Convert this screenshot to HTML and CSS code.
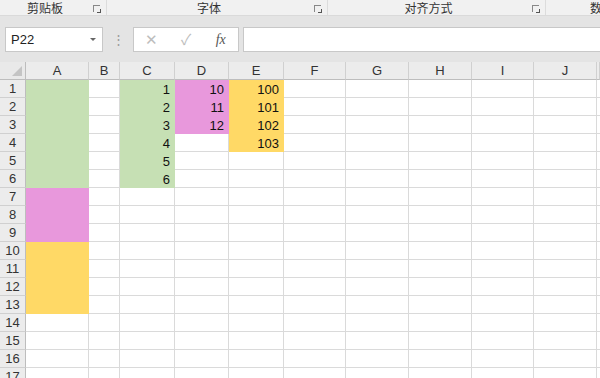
FILE: index.html
```html
<!DOCTYPE html>
<html lang="zh-CN">

<head>
    <meta charset="UTF-8">
    <title>工作表</title>
    <link rel="stylesheet" href="styles.css">
</head>

<body>
    <div class="ribbon">
        <div class="group g1"><span>剪贴板</span><i class="launcher"></i></div>
        <div class="group g2"><span>字体</span><i class="launcher"></i></div>
        <div class="group g3"><span>对齐方式</span><i class="launcher"></i></div>
        <div class="group g4"><span>数</span></div>
    </div>

    <div class="formula-bar">
        <div class="name-box">P22<span class="drop"></span></div>
        <div class="grip">⋮</div>
        <div class="fx-buttons">
            <span class="btn off">✕</span>
            <span class="btn off">✓</span>
            <span class="btn fx">fx</span>
        </div>
        <div class="formula-input"></div>
    </div>

    <div class="sheet" id="sheet"></div>

    <script>
        // columns and fills for the visible part of the sheet
        const cols = ["A", "B", "C", "D", "E", "F", "G", "H", "I", "J", ""];
        const fills = {
            A: { 1: "g", 2: "g", 3: "g", 4: "g", 5: "g", 6: "g", 7: "p", 8: "p", 9: "p", 10: "y", 11: "y", 12: "y", 13: "y" },
            C: { 1: "g", 2: "g", 3: "g", 4: "g", 5: "g", 6: "g" },
            D: { 1: "p", 2: "p", 3: "p" },
            E: { 1: "y", 2: "y", 3: "y", 4: "y" }
        };
        const values = {
            C: { 1: 1, 2: 2, 3: 3, 4: 4, 5: 5, 6: 6 },
            D: { 1: 10, 2: 11, 3: 12 },
            E: { 1: 100, 2: 101, 3: 102, 4: 103 }
        };

        let html = '<div class="corner"><i></i></div>';
        cols.forEach(c => { html += `<div class="col-head">${c}</div>`; });

        for (let r = 1; r <= 17; r++) {
            html += `<div class="row-head">${r}</div>`;
            cols.forEach(c => {
                const fill = (fills[c] && fills[c][r]) || "";
                const val = (values[c] && values[c][r] !== undefined) ? values[c][r] : "";
                html += `<div class="cell ${fill}">${val}</div>`;
            });
        }
        document.getElementById('sheet').innerHTML = html;
    </script>
</body>

</html>
```

FILE: styles.css
```css
body {
    margin: 0;
    width: 600px;
    height: 378px;
    overflow: hidden;
    background: #e4e4e4;
    font-family: "Liberation Sans", Arial, sans-serif;
    color: #222;
}

/* ribbon group labels */
.ribbon {
    display: flex;
    height: 15px;
    background: #f1f1f1;
    border-bottom: 1px solid #dadada;
    font-family: "Noto Sans CJK SC", sans-serif;
    font-size: 12px;
    color: #333;
}

.group {
    position: relative;
    flex: none;
    height: 15px;
    line-height: 15px;
    padding-right: 16px;
    box-sizing: border-box;
    text-align: center;
    border-right: 1px solid #dcdcdc;
}

.group span {
    display: block;
}

.g1 {
    width: 107px;
}

.g2 {
    width: 221px;
}

.g3 {
    width: 218px;
}

.g4 {
    flex: 1;
    padding: 0 0 0 44px;
    text-align: left;
    white-space: nowrap;
    overflow: hidden;
    border-right: none;
}

.launcher {
    position: absolute;
    right: 6px;
    top: 5px;
    width: 6px;
    height: 6px;
    border-top: 1px solid #888;
    border-left: 1px solid #888;
}

.launcher::after {
    content: "";
    position: absolute;
    right: -1px;
    bottom: -1px;
    width: 3px;
    height: 3px;
    border-right: 1px solid #555;
    border-bottom: 1px solid #555;
}

/* formula bar */
.formula-bar {
    display: flex;
    align-items: stretch;
    height: 25px;
    margin-top: 11px;
    padding-left: 5px;
}

.name-box {
    position: relative;
    width: 98px;
    box-sizing: border-box;
    background: #fff;
    border: 1px solid #c8c8c8;
    font-size: 13px;
    line-height: 23px;
    padding-left: 5px;
    color: #222;
}

.drop {
    position: absolute;
    right: 6px;
    top: 10px;
    border-left: 3px solid transparent;
    border-right: 3px solid transparent;
    border-top: 3px solid #666;
}

.grip {
    width: 30px;
    text-align: center;
    color: #9a9a9a;
    font-size: 13px;
    line-height: 25px;
}

.fx-buttons {
    display: flex;
    width: 106px;
    box-sizing: border-box;
    background: #fff;
    border: 1px solid #c8c8c8;
}

.btn {
    flex: 1;
    text-align: center;
    line-height: 23px;
    font-size: 15px;
}

.btn.off {
    color: #bdbdbd;
}

.btn.fx {
    font-family: "Liberation Serif", serif;
    font-style: italic;
    font-size: 14px;
    color: #555;
}

.formula-input {
    flex: 1;
    margin-left: 4px;
    background: #fff;
    border: 1px solid #c8c8c8;
    border-right: none;
}

/* worksheet grid */
.sheet {
    display: grid;
    grid-template-columns: 26px 63px 31px 55px 54px 55px 62px 63px 63px 62px 63px 3px;
    grid-auto-rows: 18px;
    margin-top: 10px;
    background: #fff;
}

.sheet > div {
    box-sizing: border-box;
}

.corner {
    position: relative;
    background: #e9e9e9;
    border-right: 1px solid #bdbdbd;
    border-bottom: 1px solid #bdbdbd;
}

.corner i {
    position: absolute;
    right: 3px;
    bottom: 3px;
    border-left: 10px solid transparent;
    border-bottom: 10px solid #c4c4c4;
}

.col-head {
    background: #ececec;
    border-right: 1px solid #d0d0d0;
    border-bottom: 1px solid #bdbdbd;
    text-align: center;
    font-size: 13px;
    line-height: 18px;
    color: #333;
}

.row-head {
    background: #ececec;
    border-right: 1px solid #bdbdbd;
    border-bottom: 1px solid #d0d0d0;
    text-align: center;
    font-size: 13px;
    line-height: 18px;
    color: #333;
}

.cell {
    border-right: 1px solid #dadada;
    border-bottom: 1px solid #dadada;
    text-align: right;
    padding-right: 4px;
    font-size: 13px;
    line-height: 19px;
    color: #111;
}

.cell.g {
    background: #c6e0b4;
    border-color: #c6e0b4;
}

.cell.p {
    background: #e898dc;
    border-color: #e898dc;
}

.cell.y {
    background: #ffd966;
    border-color: #ffd966;
}
```
